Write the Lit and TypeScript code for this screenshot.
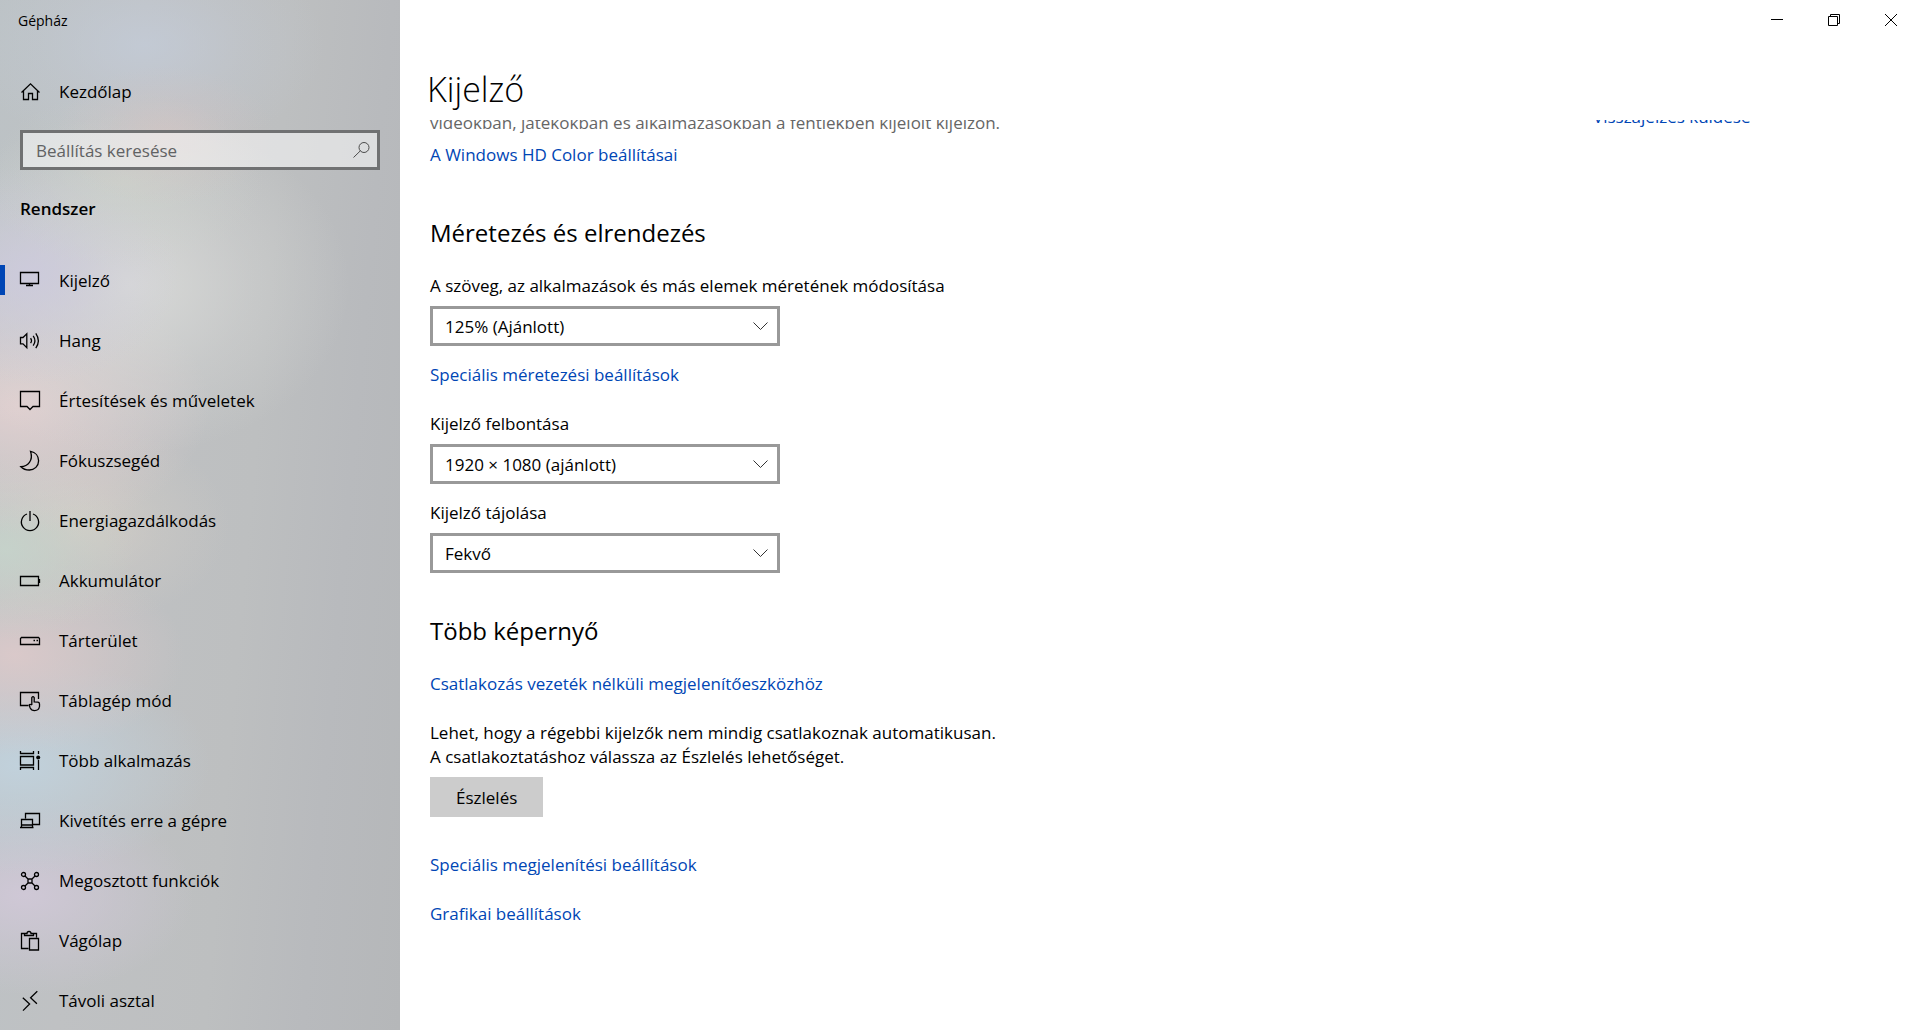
import { LitElement, html, css, svg, SVGTemplateResult } from "lit";
import { customElement, property, state } from "lit/decorators.js";
import { classMap } from "lit/directives/class-map.js";

const icons: Record<string, SVGTemplateResult> = {
  home: svg`<path d="M1.5 11.5 L10.5 2.8 L19.5 11.5 M3.5 9.8 V18.5 H8.5 V12.5 H12.5 V18.5 H17.5 V9.8"/>`,
  search: svg`<path class="thin" d="M1.5 17.5 L8.6 10.6"/><circle class="thin" cx="12" cy="7.5" r="5"/>`,
  display: svg`<path d="M0.5 2.5 H18.5 V13.5 H0.5 Z M9.5 13.5 V16 M6 15.5 H13"/>`,
  sound: svg`<path d="M0.5 7.5 H3 L6.8 3.8 V17.6 L3 13.8 H0.5 Z M10.6 8.2 Q12.4 10.7 10.6 13.2 M13.2 5.8 Q16.6 10.7 13.2 15.6 M15.8 3.3 Q20.9 10.7 15.8 18.2"/>`,
  notify: svg`<path d="M0.5 1.5 H19.5 V16.5 H13 L10 19.5 L7 16.5 H0.5 Z"/>`,
  moon: svg`<path d="M10.5 1.4 C15.5 2.3 18.6 6.2 18.6 10.8 C18.6 16 14.5 20 9.4 20 C5.6 20 2.6 18.5 0.9 16.7 C7.8 16.6 13.6 10.5 10.5 1.4 Z"/>`,
  power: svg`<path d="M7 4 A8.6 8.6 0 1 0 13 4"/><path class="soft" d="M10 1 V11"/>`,
  battery: svg`<path d="M0.5 6.5 H18.5 V15.5 H0.5 Z M19.5 9 V13"/>`,
  storage: svg`<path d="M1.5 7.5 H18.5 L19.5 8.5 V14.5 H0.5 V8.5 Z M13.5 10.5 H15 M16.5 10.5 H18"/>`,
  tablet: svg`<path d="M8.5 15.5 H0.5 V2.5 H18.5 V9"/><path d="M11.8 15 V7.6 Q13 5.8 14.2 7.6 V11.8 L18 12.2 Q19.5 12.6 19.5 14 V16.5 Q18.8 20.6 14.6 20.6 Q11.4 20.6 10.2 18 L9.2 15 Q9.8 13.6 11.8 15"/>`,
  multitask: svg`<path d="M0.5 1 V3.5 H13.5 V1 M0.5 6.5 H13.5 V15 H0.5 Z M0.5 20 V17.5 H13.5 V20 M18.5 1 V4 M18.5 10 V20"/><circle class="solid" cx="18.2" cy="7.6" r="2"/>`,
  project: svg`<path d="M5.5 8.5 V3.5 H19.5 V14.5 H13 M1.5 17 V9.5 H12.5 V17 M0 17.5 H13.5 M2 15 H12"/>`,
  shared: svg`<circle cx="3.5" cy="4.5" r="2"/><circle cx="16.5" cy="4.5" r="2"/><circle cx="3.5" cy="17.5" r="2"/><circle cx="16.5" cy="17.5" r="2"/><path d="M8 9 H12 V13 H8 Z M5 6 L8 9 M15 6 L12 9 M5 16 L8 13 M15 16 L12 13"/>`,
  clipboard: svg`<path d="M8.5 18.5 H1.5 V3.5 H5 M13 3.5 H16.5 V7.5 M4.5 5.5 V3.5 H7 Q7 1.5 9 1.5 Q11 1.5 11 3.5 H13.5 V5.5 Z M9.5 8.5 H18.5 V20 H9.5 Z"/>`,
  remote: svg`<path d="M2.8 7.8 L9.6 14 L3 20.6 M17.3 1.2 L10.6 7.8 L16.9 13.8"/>`,
  chevron: svg`<path class="thin" d="M2.5 6.5 L9.5 13.5 L16.5 6.5"/>`,
  minimize: svg`<path class="thin" d="M4 9.5 H16"/>`,
  restore: svg`<path class="thin" d="M4.5 6.5 H13.5 V15.5 H4.5 Z M6.5 6.5 V4.5 H15.5 V13.5 H13.5"/>`,
  close: svg`<path class="thin" d="M4 4 L16 16 M16 4 L4 16"/>`,
};

@customElement("ui-icon")
class UiIcon extends LitElement {
  static styles = css`
    :host { display: block; width: 20px; height: 20px; flex: none; }
    .glyph { display: block; width: 20px; height: 20px; overflow: visible; fill: none; stroke: currentColor; stroke-width: 1.3; }
    .thin { stroke-width: 1; }
    .soft { stroke-width: 2; stroke: #444; }
    .solid { fill: currentColor; stroke: none; }
  `;
  @property() name = "";
  render() {
    return html`<svg class="glyph" viewBox="0 0 20 20" aria-hidden="true">${icons[this.name]}</svg>`;
  }
}

@customElement("drop-field")
class DropField extends LitElement {
  static styles = css`
    :host { display: block; }
    .field { display: flex; flex-direction: column; gap: 8px; line-height: 24px; }
    .box { display: grid; align-items: center; width: 350px; max-width: 100%; }
    .choice {
      grid-area: 1 / 1; width: 100%; height: 40px; box-sizing: border-box; margin: 0;
      padding: 2px 40px 0 12px; border: 3px solid #999; border-radius: 0; background: #fff;
      color: #000; font: inherit; appearance: none;
    }
    .arrow { grid-area: 1 / 1; justify-self: end; margin-right: 9px; color: #333; pointer-events: none; }
  `;
  @property() label = "";
  @property() value = "";
  render() {
    return html`<div class="field">
      <label for="choice">${this.label}</label>
      <div class="box">
        <select class="choice" id="choice"><option>${this.value}</option></select>
        <ui-icon class="arrow" name="chevron"></ui-icon>
      </div>
    </div>`;
  }
}

const sections = [
  ["display", "Kijelző"],
  ["sound", "Hang"],
  ["notify", "Értesítések és műveletek"],
  ["moon", "Fókuszsegéd"],
  ["power", "Energiagazdálkodás"],
  ["battery", "Akkumulátor"],
  ["storage", "Tárterület"],
  ["tablet", "Táblagép mód"],
  ["multitask", "Több alkalmazás"],
  ["project", "Kivetítés erre a gépre"],
  ["shared", "Megosztott funkciók"],
  ["clipboard", "Vágólap"],
  ["remote", "Távoli asztal"],
];

@customElement("app-root")
class AppRoot extends LitElement {
  static styles = css`
    :host {
      display: grid; grid-template-columns: 400px minmax(0, 1fr); height: 100vh; overflow: hidden;
      background: #fff; color: #000; font-family: "Segoe UI", "Open Sans", "Noto Sans", sans-serif;
      font-size: 17px; line-height: 24px;
    }
    .side {
      display: flex; flex-direction: column; overflow: hidden;
      background:
        radial-gradient(ellipse 110px 70px at 165px 135px, rgba(214, 196, 194, .6), rgba(214, 196, 194, .2) 55%, rgba(214, 196, 194, 0)),
        radial-gradient(ellipse 180px 110px at 145px 45px, rgba(196, 205, 219, .7), rgba(196, 205, 219, .25) 55%, rgba(196, 205, 219, 0)),
        radial-gradient(ellipse 140px 90px at 125px 180px, rgba(206, 212, 204, .6), rgba(206, 212, 204, .2) 55%, rgba(206, 212, 204, 0)),
        radial-gradient(ellipse 150px 110px at 30px 275px, rgba(205, 202, 222, .85), rgba(205, 202, 222, .3) 55%, rgba(205, 202, 222, 0)),
        radial-gradient(ellipse 220px 170px at 130px 285px, rgba(218, 219, 217, .9), rgba(218, 219, 217, .35) 55%, rgba(218, 219, 217, 0)),
        radial-gradient(ellipse 190px 130px at 20px 405px, rgba(226, 208, 208, .95), rgba(226, 208, 208, .4) 55%, rgba(226, 208, 208, 0)),
        radial-gradient(ellipse 130px 90px at 5px 550px, rgba(198, 212, 203, .85), rgba(198, 212, 203, .3) 55%, rgba(198, 212, 203, 0)),
        radial-gradient(ellipse 150px 100px at 80px 525px, rgba(216, 209, 199, .7), rgba(216, 209, 199, .25) 55%, rgba(216, 209, 199, 0)),
        radial-gradient(ellipse 170px 100px at 15px 655px, rgba(219, 201, 202, .95), rgba(219, 201, 202, .4) 55%, rgba(219, 201, 202, 0)),
        radial-gradient(ellipse 190px 110px at 20px 765px, rgba(193, 210, 221, .95), rgba(193, 210, 221, .4) 55%, rgba(193, 210, 221, 0)),
        radial-gradient(ellipse 170px 100px at 25px 895px, rgba(208, 200, 215, .95), rgba(208, 200, 215, .4) 55%, rgba(208, 200, 215, 0)),
        linear-gradient(95deg, #bcc2c5 0, #bfc1c3 30%, #bdbfc0 60%, #b8babd 80%, #b5b7b9 100%);
    }
    .app-name { padding: 9px 18px 7px; font-size: 14px; }
    .row { display: flex; align-items: center; gap: 19px; height: 60px; padding: 0 20px; color: #000; text-decoration: none; }
    .caption { padding-top: 2px; }
    .home { margin: 21px 0 9px; }
    .search { display: grid; align-items: center; margin: 0 20px; }
    .query {
      grid-area: 1 / 1; width: 100%; height: 40px; box-sizing: border-box; padding: 0 44px 0 13px;
      border: 3px solid #707172; border-radius: 0; background: rgba(255, 255, 255, .5);
      color: #000; font: inherit; outline: none;
    }
    .query::placeholder { color: #616263; opacity: 1; }
    .lens { grid-area: 1 / 1; justify-self: end; margin-right: 8px; color: #4c4c4c; pointer-events: none; }
    .group { margin: 0; padding: 27px 20px 29px; font-size: 17px; font-weight: 600; line-height: 24px; }
    .list { margin: 0; padding: 0; list-style: none; }
    .active { background: linear-gradient(#0046b5, #0046b5) left center / 5px 30px no-repeat; }
    .main { display: flex; flex-direction: column; min-width: 0; min-height: 0; }
    .controls { display: flex; justify-content: flex-end; }
    .control { width: 57px; height: 40px; padding: 10px 19px 10px 18px; border: 0; background: none; color: #000; }
    .title { margin: 0; padding: 25px 27px 7px; font-size: 34px; font-weight: 300; line-height: 48px; }
    .scroll { flex: 1; min-height: 0; overflow: hidden; }
    .page { display: flex; align-items: flex-start; margin-top: -15px; padding-left: 30px; }
    .settings { display: flex; flex-direction: column; align-items: flex-start; flex: 1; padding-top: 6px; }
    .related { width: 327px; box-sizing: border-box; }
    .note { margin: 0 0 8px; color: #666; }
    .link { color: #0046b5; text-decoration: none; }
    .heading { margin: 41px 0 25px; font-size: 24px; font-weight: 400; line-height: 33px; }
    .heading.first { margin-top: 49px; }
    .gap { margin-top: 17px; }
    .gap-wide { margin-top: 25px; }
    .gap-large { margin-top: 36px; }
    .para { margin: 25px 0 8px; }
    .detect { height: 40px; padding: 2px 26px 0; border: 0; background: #ccc; color: #000; font: inherit; }
  `;

  @state() private current = "display";

  render() {
    return html`
      <nav class="side">
        <div class="app-name">Gépház</div>
        <a class="row home" href="#home"><ui-icon name="home"></ui-icon><span class="caption">Kezdőlap</span></a>
        <div class="search">
          <input class="query" type="text" placeholder="Beállítás keresése" aria-label="Beállítás keresése" />
          <ui-icon class="lens" name="search"></ui-icon>
        </div>
        <h2 class="group">Rendszer</h2>
        <ul class="list">
          ${sections.map(
            ([icon, label]) => html`<li>
              <a class=${classMap({ row: true, active: this.current === icon })} href="#${icon}"
                @click=${() => (this.current = icon)}><ui-icon name=${icon}></ui-icon><span class="caption">${label}</span></a>
            </li>`
          )}
        </ul>
      </nav>
      <main class="main">
        <div class="controls">
          <button class="control" aria-label="Kis méret"><ui-icon name="minimize"></ui-icon></button>
          <button class="control" aria-label="Előző méret"><ui-icon name="restore"></ui-icon></button>
          <button class="control" aria-label="Bezárás"><ui-icon name="close"></ui-icon></button>
        </div>
        <h1 class="title">Kijelző</h1>
        <div class="scroll">
          <div class="page">
            <div class="settings">
              <p class="note">videókban, játékokban és alkalmazásokban a fentiekben kijelölt kijelzőn.</p>
              <a class="link" href="#hdcolor">A Windows HD Color beállításai</a>
              <h2 class="heading first">Méretezés és elrendezés</h2>
              <drop-field label="A szöveg, az alkalmazások és más elemek méretének módosítása" value="125% (Ajánlott)"></drop-field>
              <a class="link gap" href="#scaling">Speciális méretezési beállítások</a>
              <drop-field class="gap-wide" label="Kijelző felbontása" value="1920 × 1080 (ajánlott)"></drop-field>
              <drop-field class="gap" label="Kijelző tájolása" value="Fekvő"></drop-field>
              <h2 class="heading">Több képernyő</h2>
              <a class="link" href="#wireless">Csatlakozás vezeték nélküli megjelenítőeszközhöz</a>
              <p class="para">Lehet, hogy a régebbi kijelzők nem mindig csatlakoznak automatikusan.<br />A csatlakoztatáshoz válassza az Észlelés lehetőséget.</p>
              <button class="detect">Észlelés</button>
              <a class="link gap-large" href="#advanced">Speciális megjelenítési beállítások</a>
              <a class="link gap-wide" href="#graphics">Grafikai beállítások</a>
            </div>
            <aside class="related"><a class="link" href="#feedback">Visszajelzés küldése</a></aside>
          </div>
        </div>
      </main>
    `;
  }
}
